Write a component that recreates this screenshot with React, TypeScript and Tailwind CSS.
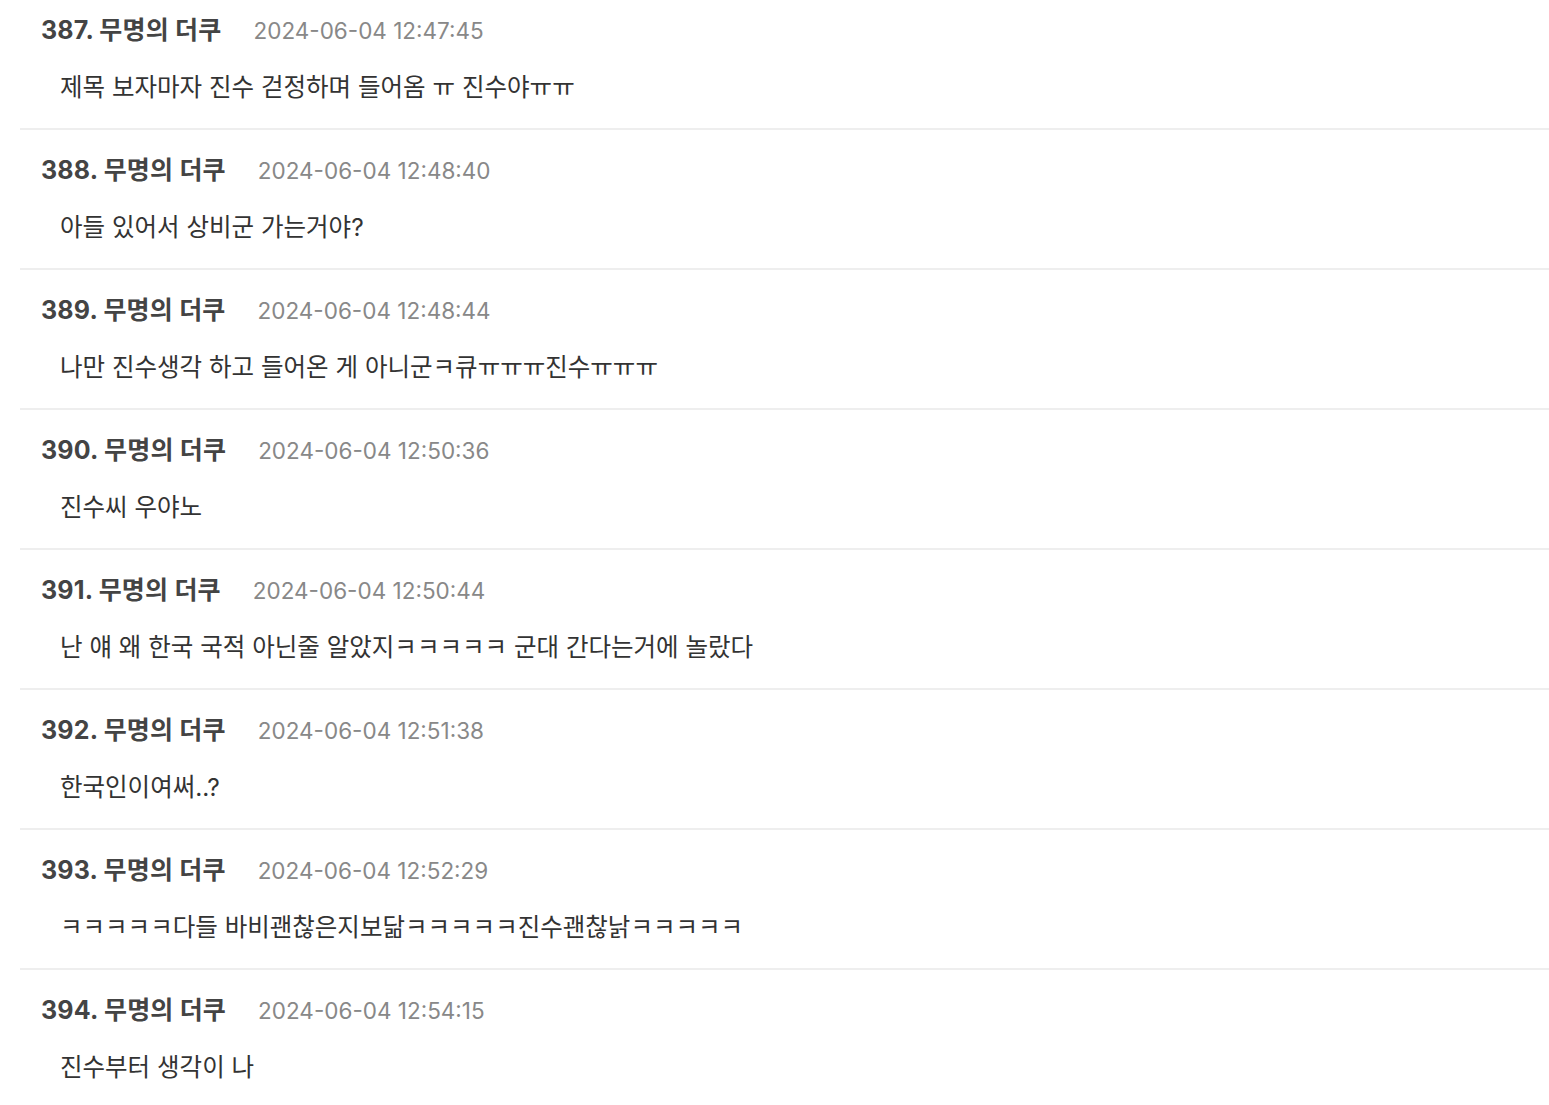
import React from "react";

const items = [
  { n: 387, t: "2024-06-04 12:47:45", b: "제목 보자마자 진수 걷정하며 들어옴 ㅠ 진수야ㅠㅠ" },
  { n: 388, t: "2024-06-04 12:48:40", b: "아들 있어서 상비군 가는거야?" },
  { n: 389, t: "2024-06-04 12:48:44", b: "나만 진수생각 하고 들어온 게 아니군ㅋ큐ㅠㅠㅠ진수ㅠㅠㅠ" },
  { n: 390, t: "2024-06-04 12:50:36", b: "진수씨 우야노" },
  { n: 391, t: "2024-06-04 12:50:44", b: "난 얘 왜 한국 국적 아닌줄 알았지ㅋㅋㅋㅋㅋ 군대 간다는거에 놀랐다" },
  { n: 392, t: "2024-06-04 12:51:38", b: "한국인이여써..?" },
  { n: 393, t: "2024-06-04 12:52:29", b: "ㅋㅋㅋㅋㅋ다들 바비괜찮은지보닮ㅋㅋㅋㅋㅋ진수괜찮낡ㅋㅋㅋㅋㅋ" },
  { n: 394, t: "2024-06-04 12:54:15", b: "진수부터 생각이 나" },
];

export default function App() {
  return (
    <div
      className="w-[1549px] h-[1105px] overflow-hidden bg-white pl-5"
      style={{ fontFamily: 'Inter, "Noto Sans CJK KR", "Noto Sans", sans-serif' }}
    >
      <div className="-mt-[10px]">
        {items.map((it) => (
          <div key={it.n} className="border-b-2 border-[#eeeeee] pt-[23px] pb-[23px]">
            <div className="flex items-center h-9 pl-[21px]">
              <span className="text-[25px] font-bold text-[#444444] tracking-[0.2px]">
                {it.n}. 무명의 더쿠
              </span>
              <span className="ml-8 text-[22.5px] text-[#888888]">{it.t}</span>
            </div>
            <div className="mt-[20px] h-9 flex items-center pl-10 text-[24.5px] text-[#333333]">
              {it.b}
            </div>
          </div>
        ))}
      </div>
    </div>
  );
}
